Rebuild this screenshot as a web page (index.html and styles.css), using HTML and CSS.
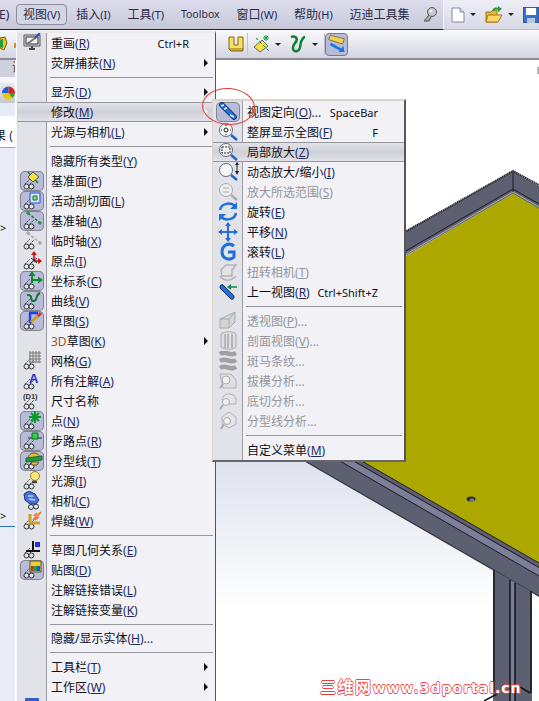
FILE: index.html
```html
<!DOCTYPE html>
<html lang="zh-CN">
  <head>
    <meta charset="UTF-8" />
    <title>视图菜单</title>
    <link rel="stylesheet" href="styles.css">
  </head>
  <body>
    <svg class="sprites" xmlns="http://www.w3.org/2000/svg">
      <symbol id="gl" viewBox="0 0 24 20">
        <path d="M5 13 L10 8 M10 13 L14 9" fill="none" stroke="#444" stroke-width="1" stroke-dasharray="2 1"/>
        <circle cx="6.5" cy="15.5" r="2.5" fill="#dbe6ee" stroke="#333"/>
        <circle cx="11.5" cy="15.5" r="2.5" fill="#dbe6ee" stroke="#333"/>
      </symbol>
      <symbol id="redraw" viewBox="0 0 24 20">
        <path d="M4 2 H20 V13 H4 Z" fill="#d8dae0" stroke="#555"/>
        <path d="M6 4 H18 V11 H6 Z" fill="#f4f4f6" stroke="#333"/>
        <path d="M7 11 L18 3" stroke="#777" stroke-width="2"/>
        <path d="M15 5 L20 0" stroke="#1c50d8" stroke-width="2"/>
        <path d="M9 16 H15 M12 13 V16" stroke="#444" stroke-width="2"/>
      </symbol>
      <symbol id="plane" viewBox="0 0 24 20">
        <use href="#gl"/>
        <path d="M8 1 L18 12" stroke="#0a8a2a" stroke-width="1.5"/>
        <path d="M13 1 L19 6 L13 11 L8 6 Z" fill="#f6e23c" stroke="#555"/>
      </symbol>
      <symbol id="cut" viewBox="0 0 24 20">
        <use href="#gl"/>
        <path d="M10 2 H20 V12 H10 Z" fill="#d8e6f4" stroke="#1c50d8"/>
        <path d="M13 5 H17 V9 H13 Z" fill="#9fd09a" stroke="#0a7a2a"/>
      </symbol>
      <symbol id="axis" viewBox="0 0 24 20">
        <use href="#gl"/>
        <path d="M8 2 L20 12" stroke="#0a8a2a" stroke-width="1.5" stroke-dasharray="3 1.5"/>
        <path d="M6 2 H10 M8 0 V4 M18 12 H22 M20 10 V14" stroke="#0a8a2a"/>
      </symbol>
      <symbol id="taxis" viewBox="0 0 24 20">
        <use href="#gl"/>
        <path d="M8 2 L20 12" stroke="#aaa" stroke-width="1.5" stroke-dasharray="3 1.5"/>
        <path d="M6 2 H10 M8 0 V4 M18 12 H22 M20 10 V14" stroke="#999"/>
      </symbol>
      <symbol id="origin" viewBox="0 0 24 20">
        <use href="#gl"/>
        <path d="M14 10 V3 M14 10 H21" stroke="#a11" stroke-width="1.5"/>
        <path d="M14 0 L11 4 H17 Z M22 10 L18 7 V13 Z" fill="#c11"/>
        <path d="M11 7 L17 12 M17 7 L11 12" stroke="#222"/>
      </symbol>
      <symbol id="coord" viewBox="0 0 24 20">
        <use href="#gl"/>
        <path d="M12 12 V4 M12 9 H19" stroke="#0a8a2a" stroke-width="2"/>
        <path d="M12 0 L8.5 5 H15.5 Z M23 9 L18 5.5 V12.5 Z" fill="#0a8a2a"/>
      </symbol>
      <symbol id="curve" viewBox="0 0 24 20">
        <use href="#gl"/>
        <path d="M7 4 C14 3 9 11 14 10 C18 9 15 4 20 2" fill="none" stroke="#0a7a2a" stroke-width="2"/>
      </symbol>
      <symbol id="sketch" viewBox="0 0 24 20">
        <use href="#gl"/>
        <path d="M9 2 H18 M10 2 V12" stroke="#2040e0" stroke-width="2.5"/>
        <path d="M11 11 L20 3" stroke="#c8a020" stroke-width="3"/>
        <path d="M18 5 L21 2" stroke="#d83030" stroke-width="3"/>
      </symbol>
      <symbol id="grid" viewBox="0 0 24 20">
        <use href="#gl"/>
        <path d="M9 2 H21 M9 5 H21 M9 8 H21 M9 11 H21 M10 0 V12 M13 0 V12 M16 0 V12 M19 0 V12" stroke="#777"/>
      </symbol>
      <symbol id="note" viewBox="0 0 24 20">
        <use href="#gl"/>
        <text x="9" y="12" class="ico-a">A</text>
      </symbol>
      <symbol id="dim" viewBox="0 0 24 20">
        <use href="#gl"/>
        <text x="3" y="8" class="ico-d">(D1)</text>
      </symbol>
      <symbol id="point" viewBox="0 0 24 20">
        <use href="#gl"/>
        <path d="M15 0 V12 M9 6 H21 M11 2 L19 10 M19 2 L11 10" stroke="#0a9a2a" stroke-width="2"/>
      </symbol>
      <symbol id="route" viewBox="0 0 24 20">
        <use href="#gl"/>
        <path d="M8 7 H22" stroke="#222"/>
        <path d="M12 2 H18 V8 H12 Z" fill="#30d040" stroke="#0a6a2a"/>
      </symbol>
      <symbol id="parting" viewBox="0 0 24 20">
        <use href="#gl"/>
        <path d="M8 8 C8 0 20 0 20 8 Z" fill="#e8c020" stroke="#554"/>
        <path d="M6 7 L22 5 L22 9 L6 11 Z" fill="#18a030" stroke="#264"/>
        <path d="M11 11 H19 L17 14 H12 Z" fill="#e8c020" stroke="#554"/>
      </symbol>
      <symbol id="light" viewBox="0 0 24 20">
        <use href="#gl"/>
        <circle cx="15" cy="5" r="4.5" fill="#f8e880" stroke="#a08018"/>
        <path d="M12 11 H17" stroke="#444" stroke-width="2.5"/>
      </symbol>
      <symbol id="camera" viewBox="0 0 24 20">
        <circle cx="16" cy="15.5" r="2.5" fill="#dbe6ee" stroke="#333"/>
        <circle cx="11" cy="16" r="2.5" fill="#dbe6ee" stroke="#333"/>
        <path d="M4 3 L9 0 L15 3 L19 9 L16 13 L10 13 L5 9 Z" fill="#4a72d8" stroke="#1c3070"/>
        <path d="M8 5 L13 5 M9 8 L15 9" stroke="#bcd0f8" stroke-width="1.5"/>
      </symbol>
      <symbol id="weld" viewBox="0 0 24 20">
        <use href="#gl"/>
        <path d="M10 3 V12 H20" fill="none" stroke="#c8a030" stroke-width="3"/>
        <path d="M13 9 L21 1 M15 9 L19 6 M14 5 L17 2" stroke="#f06818" stroke-width="1.5"/>
      </symbol>
      <symbol id="rel" viewBox="0 0 24 20">
        <use href="#gl"/>
        <path d="M13 1 V11 M6 11 H20" stroke="#111" stroke-width="2"/>
        <path d="M15 2 H20 V7 H15 Z" fill="#1c30e0"/>
      </symbol>
      <symbol id="decal" viewBox="0 0 24 20">
        <use href="#gl"/>
        <path d="M10 1 H21 V12 H10 Z" fill="#f0d030" stroke="#554"/>
        <path d="M11 6 H15 V11 H11 Z" fill="#d03030"/>
        <path d="M15 6 H20 V11 H15 Z" fill="#2050d0"/>
        <path d="M13 6 H17 V11 H13 Z" fill="#20a040"/>
      </symbol>
      <symbol id="orient" viewBox="0 0 24 20">
        <path d="M6 3 L12 9 L18 15" fill="none" stroke="#123" stroke-width="5.5" stroke-linecap="round"/>
        <path d="M6 3 L18 15" stroke="#2070e8" stroke-width="4" stroke-linecap="round"/>
        <path d="M5 4 L8 3 M8 7 L11 6 M14 13 L18 15" stroke="#e8f4ff" stroke-width="1.5"/>
      </symbol>
      <symbol id="lens" viewBox="0 0 24 20">
        <circle cx="10" cy="8" r="6.5" fill="#f4f6f8" stroke="#667"/>
        <path d="M15 13 L21 18" stroke="#2060c8" stroke-width="2.5"/>
      </symbol>
      <symbol id="zfit" viewBox="0 0 24 20">
        <use href="#lens"/>
        <circle cx="10" cy="8" r="2" fill="none" stroke="#222"/>
        <path d="M5 8 H6 M14 8 H15 M10 3 V4 M10 12 V13" stroke="#222"/>
      </symbol>
      <symbol id="zarea" viewBox="0 0 24 20">
        <use href="#lens"/>
        <path d="M6 5 H14 V11 H6 Z" fill="none" stroke="#222" stroke-dasharray="2 1"/>
      </symbol>
      <symbol id="zdyn" viewBox="0 0 24 20">
        <use href="#lens"/>
        <path d="M21 1 V11" stroke="#222"/>
        <path d="M21 0 L19 3 H23 Z M21 13 L19 9 H23 Z" fill="#222"/>
      </symbol>
      <symbol id="zsel" viewBox="0 0 24 20">
        <circle cx="10" cy="8" r="6.5" fill="#eceef0" stroke="#aaa"/>
        <path d="M15 13 L21 18" stroke="#aaa" stroke-width="2.5"/>
        <path d="M7 6 H13 M7 10 H13" stroke="#aaa"/>
      </symbol>
      <symbol id="rotate" viewBox="0 0 24 20">
        <path d="M4 8 C5 1 15 0 19 4 M20 11 C19 18 9 19 5 15" fill="none" stroke="#2070d8" stroke-width="2.5"/>
        <path d="M21 0 V7 H14 Z M3 19 V12 H10 Z" fill="#2070d8"/>
      </symbol>
      <symbol id="pan" viewBox="0 0 24 20">
        <path d="M12 2 V18 M4 10 H20" stroke="#2070d8" stroke-width="2"/>
        <path d="M12 0 L9 4 H15 Z M12 20 L9 16 H15 Z M2 10 L6 7 V13 Z M22 10 L18 7 V13 Z" fill="#2070d8"/>
      </symbol>
      <symbol id="roll" viewBox="0 0 24 20">
        <path d="M18 4 C13 0 6 3 6 10 C6 17 14 19 18 15 V10 H12" fill="none" stroke="#2070d8" stroke-width="3"/>
      </symbol>
      <symbol id="turn" viewBox="0 0 24 20">
        <path d="M5 8 L10 3 H20 L16 8 V14 H6 Z M4 14 C8 20 16 19 20 14" fill="#e4e4e6" stroke="#b4b4b8" stroke-width="1.5"/>
      </symbol>
      <symbol id="prev" viewBox="0 0 24 20">
        <path d="M6 5 L16 15" stroke="#123" stroke-width="5" stroke-linecap="round"/>
        <path d="M6 5 L16 15" stroke="#2070e8" stroke-width="3.5" stroke-linecap="round"/>
        <path d="M13 5 H21" stroke="#0a8a4a" stroke-width="1.5"/>
        <path d="M11 5 L15 2 V8 Z" fill="#0a8a4a"/>
      </symbol>
      <symbol id="persp" viewBox="0 0 24 20">
        <path d="M4 8 L19 1 V11 L13 17 H4 Z" fill="#d4d4d6" stroke="#aaa"/>
        <path d="M4 8 H13 V17 M13 8 L19 1" fill="none" stroke="#aaa"/>
      </symbol>
      <symbol id="section" viewBox="0 0 24 20">
        <path d="M5 3 C9 0 17 0 20 3 V16 C17 19 9 19 5 16 Z" fill="#dedee0" stroke="#aaa"/>
        <path d="M9 3 V17 M12 3 V17 M16 3 V17" stroke="#aaa" stroke-width="1.5"/>
      </symbol>
      <symbol id="zebra" viewBox="0 0 24 20">
        <path d="M4 3 C10 -1 14 6 20 2 M4 10 C10 6 14 13 20 9 M4 17 C10 13 14 20 20 16" fill="none" stroke="#a0a0a4" stroke-width="4.5"/>
      </symbol>
      <symbol id="draft" viewBox="0 0 24 20">
        <path d="M4 3 H15 L20 9 V17 H7 Z" fill="#e0e0e2" stroke="#b0b0b4"/>
        <circle cx="10" cy="9" r="4" fill="#f0f0f0" stroke="#aaa"/>
        <path d="M7 13 L4 17" stroke="#aaa" stroke-width="2"/>
      </symbol>
      <symbol id="under" viewBox="0 0 24 20">
        <path d="M6 9 C7 1 18 1 20 8 V13 H8" fill="#e4e4e6" stroke="#b0b0b4"/>
        <circle cx="10" cy="11" r="3.5" fill="#f0f0f0" stroke="#aaa"/>
        <path d="M7 14 L4 18" stroke="#aaa" stroke-width="2"/>
      </symbol>
      <symbol id="part2" viewBox="0 0 24 20">
        <path d="M6 6 L13 1 L20 6 V13 L13 17 L6 13 Z" fill="#e4e4e6" stroke="#b0b0b4"/>
        <circle cx="11" cy="10" r="3.5" fill="#f0f0f0" stroke="#aaa"/>
        <path d="M8 13 L5 18" stroke="#aaa" stroke-width="2"/>
      </symbol>
      <symbol id="partial" viewBox="0 0 24 20">
        <path d="M5 1 H19 V6 H5 Z" fill="#3060c8"/>
      </symbol>
    </svg>

    <div class="page">
      <div class="menubar">
        <div class="menubar-items">
          <span class="menu-cut">E)</span>
          <span class="menu-item open">视图<span class="mn">(V)</span></span>
          <span class="menu-item">插入<span class="mn">(I)</span></span>
          <span class="menu-item">工具<span class="mn">(T)</span></span>
          <span class="menu-item latin">Toolbox</span>
          <span class="menu-item">窗口<span class="mn">(W)</span></span>
          <span class="menu-item">帮助<span class="mn">(H)</span></span>
          <span class="menu-item">迈迪工具集</span>
          <svg class="pin" width="16" height="16" viewBox="0 0 16 16">
            <circle cx="10" cy="5" r="4.5" fill="#c8c8cc" stroke="#555"/>
            <circle cx="9" cy="4" r="1.5" fill="#f4f4f4"/>
            <path d="M7 8 L2 14 H7 L9 10" fill="#aaa" stroke="#555"/>
          </svg>
        </div>
        <div class="quickbar">
          <svg width="14" height="16" viewBox="0 0 14 16">
            <path d="M1 1 H9 L13 5 V15 H1 Z" fill="#fff" stroke="#7a8aa0"/>
            <path d="M9 1 V5 H13" fill="#dde6f0" stroke="#7a8aa0"/>
          </svg>
          <span class="drop"></span>
          <svg class="after-drop" width="18" height="18" viewBox="0 0 18 18">
            <path d="M1 6 H6 L8 4 H12 V16 H1 Z" fill="#e8b838" stroke="#a07818"/>
            <path d="M3 9 H17 L13 16 H1 Z" fill="#f8d868" stroke="#a07818"/>
            <path d="M8 5 C9 2 12 2 14 3" fill="none" stroke="#20a030" stroke-width="2"/>
            <path d="M17 3 L13 0 V6 Z" fill="#20a030"/>
          </svg>
          <span class="drop"></span>
          <svg class="after-drop" width="16" height="16" viewBox="0 0 16 16">
            <path d="M0 0 H16 V16 H0 Z" fill="#3a70c8" stroke="#204890"/>
            <path d="M3 1 H13 V8 H3 Z" fill="#fff"/>
            <path d="M4 11 H12 V16 H4 Z" fill="#b8c8dc"/>
          </svg>
        </div>
      </div>

      <div class="toolbar">
        <svg class="tb-left" width="18" height="18" viewBox="0 0 18 18">
          <path d="M0 3 L5 2 L7 8 L4 15 L0 13 Z" fill="#f0c020" stroke="#806010"/>
          <path d="M0 5 L3 4 V13 L0 12 Z" fill="#20a040"/>
          <path d="M14 8 H17 V13 H14 Z" fill="#d89020"/>
        </svg>
        <svg class="tb-book" width="16" height="18" viewBox="0 0 16 18">
          <path d="M1 2 H6 V10 H10 V2 H15 V14 H1 Z" fill="#f8e060" stroke="#806810"/>
          <path d="M1 14 L3 16 H15 V14" fill="#d8a820" stroke="#806810"/>
        </svg>
        <span class="tb-sep"></span>
        <svg class="tb-wand" width="20" height="20" viewBox="0 0 20 20">
          <path d="M2 13 L10 6 L16 12 L8 18 Z" fill="#f8e040" stroke="#666"/>
          <path d="M4 4 L17 17" stroke="#208030" stroke-dasharray="3 2"/>
          <path d="M14 1 V7 M11 4 H17 M12 2 L16 6 M16 2 L12 6" stroke="#10a040"/>
        </svg>
        <span class="drop"></span>
        <svg class="after-drop" width="16" height="18" viewBox="0 0 16 18">
          <path d="M2 2 C8 0 9 5 6 8 C3 12 3 17 8 16 C13 15 10 8 13 5 C14 3 15 2 16 2" fill="none" stroke="#0a8030" stroke-width="2.5"/>
        </svg>
        <span class="drop"></span>
        <span class="tb-sep"></span>
        <span class="tb-btn">
          <svg width="24" height="24" viewBox="0 0 24 24">
            <path d="M3 5 L19 10 L21 4 L5 0 Z" fill="#f0d060" stroke="#806810" transform="translate(0 2)"/>
            <path d="M5 12 L18 19" stroke="#1878e0" stroke-width="3"/>
            <path d="M21 21 L14 21 L20 14 Z" fill="#1878e0"/>
          </svg>
        </span>
      </div>

      <div class="workspace">
        <div class="sidebar">
          <div class="side-tab"><span class="clip-char">设</span></div>
          <div class="side-gap"></div>
          <div class="side-ball">
            <svg width="14" height="14" viewBox="0 0 14 14">
              <path d="M7 0 A7 7 0 0 0 0 7 H7 Z" fill="#2060d0"/>
              <path d="M7 0 A7 7 0 0 1 14 7 H7 Z" fill="#d02828"/>
              <path d="M0 7 A7 7 0 0 0 14 7 Z" fill="#e8c818"/>
              <path d="M7 7 H14 A7 7 0 0 1 11 12 Z" fill="#30a030"/>
            </svg>
          </div>
          <div class="side-pale"></div>
          <div class="side-title">果 <span class="mn">(</span></div>
          <div class="side-tree">
            <span class="side-arrow first">&gt;</span>
            <span class="side-arrow second">&gt;</span>
            <span class="side-line"></span>
          </div>
        </div>

        <svg class="view" viewBox="16 60 523 641" preserveAspectRatio="none">
          <defs>
            <linearGradient id="floor" x1="0" y1="0" x2="0" y2="1">
              <stop offset="0" stop-color="#dce0ec"/>
              <stop offset="1" stop-color="#ffffff"/>
            </linearGradient>
          </defs>
          <rect x="16" y="60" width="523" height="641" fill="#ffffff"/>
          <rect x="216" y="450" width="323" height="160" fill="url(#floor)"/>
          <rect x="537" y="67" width="2" height="7" fill="#b8b8b8"/>

          <!-- table top -->
          <path d="M300 291 L513 171 L539 186 V210 L513 194 L300 317 Z" fill="#5c6070"/>
          <path d="M300 291 L513 171 L539 185" fill="none" stroke="#2c2c30" stroke-width="2" stroke-dasharray="1.5 .5"/>
          <path d="M513 172 V192" stroke="#1c1c22" stroke-width="1"/>
          <path d="M300 312 L513 189 L539 204" fill="none" stroke="#1c1c22" stroke-width="1"/>
          <path d="M300 316 L513 192 L539 207" fill="none" stroke="#b0b0c4" stroke-width="1"/>
          <path d="M300 318 L513 193.500 L539 208.500 V563 L300 425.500 Z" fill="#aca800"/>
          <ellipse cx="471" cy="499" rx="4.500" ry="2.500" fill="#2c2c34"/>
          <ellipse cx="472" cy="500" rx="2.500" ry="1.500" fill="#7a7c8c"/>

          <!-- front rail -->
          <path d="M300 425.500 L539 563 V597 L300 459 Z" fill="#5c6070"/>
          <path d="M300 431 L539 568 V576 L300 438 Z" fill="#7c7e9a"/>
          <path d="M300 425.500 L539 563" stroke="#1c1c22" stroke-width="1"/>
          <path d="M300 430 L539 567.500" stroke="#1c1c22" stroke-width="1"/>
          <path d="M300 438 L539 576" stroke="#1c1c22" stroke-width="1"/>
          <path d="M300 458 L539 596" stroke="#33343c" stroke-width="1"/>

          <!-- leg -->
          <path d="M493 570 L532 592 V701 H493 Z" fill="#5c6070"/>
          <path d="M510 580 L515 583 V701 H510 Z" fill="#7c7e9a"/>
          <path d="M494 570 V692 M510 580 V701 M515 583 V701 M531 591 V693" stroke="#141418" stroke-width="1.500"/>
          <path d="M484 701 L497 694 M520 687 L530 693" stroke="#141418" stroke-width="1.500"/>
        </svg>
      </div>

      <ul class="menu menu-main">
        <li class="row"><span class="ico"><svg><use href="#redraw"/></svg></span><span class="lbl">重画<span class="mn">(<u>R</u>)</span></span><span class="sc">Ctrl+R</span></li>
        <li class="row"><span class="ico"></span><span class="lbl">荧屏捕获<span class="mn">(<u>N</u>)</span></span><span class="arrow"></span></li>
        <li class="sep"></li>
        <li class="row"><span class="ico"></span><span class="lbl">显示<span class="mn">(<u>D</u>)</span></span><span class="arrow"></span></li>
        <li class="row hot"><span class="ico"></span><span class="lbl">修改<span class="mn">(<u>M</u>)</span></span><span class="arrow"></span></li>
        <li class="row"><span class="ico"></span><span class="lbl">光源与相机<span class="mn">(<u>L</u>)</span></span><span class="arrow"></span></li>
        <li class="sep"></li>
        <li class="row"><span class="ico"></span><span class="lbl">隐藏所有类型<span class="mn">(<u>Y</u>)</span></span></li>
        <li class="row"><span class="ico on"><svg><use href="#plane"/></svg></span><span class="lbl">基准面<span class="mn">(<u>P</u>)</span></span></li>
        <li class="row"><span class="ico on"><svg><use href="#cut"/></svg></span><span class="lbl">活动剖切面<span class="mn">(<u>L</u>)</span></span></li>
        <li class="row"><span class="ico on"><svg><use href="#axis"/></svg></span><span class="lbl">基准轴<span class="mn">(<u>A</u>)</span></span></li>
        <li class="row"><span class="ico"><svg><use href="#taxis"/></svg></span><span class="lbl">临时轴<span class="mn">(<u>X</u>)</span></span></li>
        <li class="row"><span class="ico"><svg><use href="#origin"/></svg></span><span class="lbl">原点<span class="mn">(<u>I</u>)</span></span></li>
        <li class="row"><span class="ico on"><svg><use href="#coord"/></svg></span><span class="lbl">坐标系<span class="mn">(<u>C</u>)</span></span></li>
        <li class="row"><span class="ico on"><svg><use href="#curve"/></svg></span><span class="lbl">曲线<span class="mn">(<u>V</u>)</span></span></li>
        <li class="row"><span class="ico on"><svg><use href="#sketch"/></svg></span><span class="lbl">草图<span class="mn">(<u>S</u>)</span></span></li>
        <li class="row"><span class="ico"></span><span class="lbl"><span class="num">3D</span>草图<span class="mn">(<u>K</u>)</span></span><span class="arrow"></span></li>
        <li class="row"><span class="ico"><svg><use href="#grid"/></svg></span><span class="lbl">网格<span class="mn">(<u>G</u>)</span></span></li>
        <li class="row"><span class="ico"><svg><use href="#note"/></svg></span><span class="lbl">所有注解<span class="mn">(<u>A</u>)</span></span></li>
        <li class="row"><span class="ico"><svg><use href="#dim"/></svg></span><span class="lbl">尺寸名称</span></li>
        <li class="row"><span class="ico on"><svg><use href="#point"/></svg></span><span class="lbl">点<span class="mn">(<u>N</u>)</span></span></li>
        <li class="row"><span class="ico on"><svg><use href="#route"/></svg></span><span class="lbl">步路点<span class="mn">(<u>R</u>)</span></span></li>
        <li class="row"><span class="ico on"><svg><use href="#parting"/></svg></span><span class="lbl">分型线<span class="mn">(<u>T</u>)</span></span></li>
        <li class="row"><span class="ico"><svg><use href="#light"/></svg></span><span class="lbl">光源<span class="mn">(<u>I</u>)</span></span></li>
        <li class="row"><span class="ico"><svg><use href="#camera"/></svg></span><span class="lbl">相机<span class="mn">(<u>C</u>)</span></span></li>
        <li class="row"><span class="ico"><svg><use href="#weld"/></svg></span><span class="lbl">焊缝<span class="mn">(<u>W</u>)</span></span></li>
        <li class="sep"></li>
        <li class="row"><span class="ico"><svg><use href="#rel"/></svg></span><span class="lbl">草图几何关系<span class="mn">(<u>E</u>)</span></span></li>
        <li class="row"><span class="ico on"><svg><use href="#decal"/></svg></span><span class="lbl">贴图<span class="mn">(<u>D</u>)</span></span></li>
        <li class="row"><span class="ico"></span><span class="lbl">注解链接错误<span class="mn">(<u>L</u>)</span></span></li>
        <li class="row"><span class="ico"></span><span class="lbl">注解链接变量<span class="mn">(<u>K</u>)</span></span></li>
        <li class="sep tight"></li>
        <li class="row"><span class="ico"></span><span class="lbl">隐藏/显示实体<span class="mn">(<u>H</u>)...</span></span></li>
        <li class="sep"></li>
        <li class="row"><span class="ico"></span><span class="lbl">工具栏<span class="mn">(<u>T</u>)</span></span><span class="arrow"></span></li>
        <li class="row"><span class="ico"></span><span class="lbl">工作区<span class="mn">(<u>W</u>)</span></span><span class="arrow"></span></li>
        <li class="row"><span class="ico"><svg><use href="#partial"/></svg></span></li>
      </ul>

      <ul class="menu menu-sub">
        <li class="row"><span class="ico on"><svg><use href="#orient"/></svg></span><span class="lbl">视图定向<span class="mn">(<u>O</u>)...</span></span><span class="sc">SpaceBar</span></li>
        <li class="row"><span class="ico"><svg><use href="#zfit"/></svg></span><span class="lbl">整屏显示全图<span class="mn">(<u>F</u>)</span></span><span class="sc">F</span></li>
        <li class="row hot"><span class="ico"><svg><use href="#zarea"/></svg></span><span class="lbl">局部放大<span class="mn">(<u>Z</u>)</span></span></li>
        <li class="row"><span class="ico"><svg><use href="#zdyn"/></svg></span><span class="lbl">动态放大/缩小<span class="mn">(<u>I</u>)</span></span></li>
        <li class="row off"><span class="ico"><svg><use href="#zsel"/></svg></span><span class="lbl">放大所选范围<span class="mn">(<u>S</u>)</span></span></li>
        <li class="row"><span class="ico"><svg><use href="#rotate"/></svg></span><span class="lbl">旋转<span class="mn">(<u>E</u>)</span></span></li>
        <li class="row"><span class="ico"><svg><use href="#pan"/></svg></span><span class="lbl">平移<span class="mn">(<u>N</u>)</span></span></li>
        <li class="row"><span class="ico"><svg><use href="#roll"/></svg></span><span class="lbl">滚转<span class="mn">(<u>L</u>)</span></span></li>
        <li class="row off"><span class="ico"><svg><use href="#turn"/></svg></span><span class="lbl">扭转相机<span class="mn">(<u>T</u>)</span></span></li>
        <li class="row"><span class="ico"><svg><use href="#prev"/></svg></span><span class="lbl">上一视图<span class="mn">(<u>R</u>)</span></span><span class="sc">Ctrl+Shift+Z</span></li>
        <li class="sep"></li>
        <li class="row off"><span class="ico"><svg><use href="#persp"/></svg></span><span class="lbl">透视图<span class="mn">(<u>P</u>)...</span></span></li>
        <li class="row off"><span class="ico"><svg><use href="#section"/></svg></span><span class="lbl">剖面视图<span class="mn">(<u>V</u>)...</span></span></li>
        <li class="row off"><span class="ico"><svg><use href="#zebra"/></svg></span><span class="lbl">斑马条纹<span class="mn">...</span></span></li>
        <li class="row off"><span class="ico"><svg><use href="#draft"/></svg></span><span class="lbl">拔模分析<span class="mn">...</span></span></li>
        <li class="row off"><span class="ico"><svg><use href="#under"/></svg></span><span class="lbl">底切分析<span class="mn">...</span></span></li>
        <li class="row off"><span class="ico"><svg><use href="#part2"/></svg></span><span class="lbl">分型线分析<span class="mn">...</span></span></li>
        <li class="sep"></li>
        <li class="row"><span class="ico"></span><span class="lbl">自定义菜单<span class="mn">(<u>M</u>)</span></span></li>
      </ul>

      <div class="callout"></div>
      <div class="watermark"><span class="wm-cn">三维网</span>www.3dportal.cn</div>
    </div>
  </body>
</html>
```

FILE: styles.css
```css
* {
  margin: 0;
  padding: 0;
  box-sizing: border-box;
}

body {
  font-family: "Noto Sans", "Noto Sans CJK SC", sans-serif;
  font-size: 12px;
  color: #101018;
  background: #ffffff;
  overflow: hidden;
}

.sprites {
  position: absolute;
  width: 0;
  height: 0;
}

.page {
  position: relative;
  width: 539px;
  height: 701px;
  overflow: hidden;
  display: flex;
  flex-direction: column;
}

/* top menu */
.menubar {
  height: 30px;
  display: flex;
  flex-shrink: 0;
}

.menubar-items {
  width: 444px;
  flex-shrink: 0;
  display: flex;
  align-items: center;
  overflow: hidden;
  background: linear-gradient(#dddded, #c6c8d8);
  border-bottom: 1px solid #22222c;
  border-right: 1px solid #f2f2f8;
  color: #2c2c44;
}

.menu-cut {
  width: 16px;
  flex-shrink: 0;
  text-indent: -1px;
  overflow: hidden;
}

.menu-item {
  flex-shrink: 0;
  padding: 0 7px;
  margin-right: 0.8px;
  height: 21px;
  line-height: 19px;
  border: 1px solid transparent;
  white-space: nowrap;
}

.menu-item .mn {
  font-size: 11px;
}

.menu-item.open {
  margin-right: 1px;
  padding: 0 6px;
  border-color: #8c8c9c;
  border-radius: 4px;
  background: #d4d6e6;
}

.menu-item.latin {
  font-size: 10.5px;
}

.mn {
  color: #1c2a5c;
}

.pin {
  margin-left: 4px;
  flex-shrink: 0;
}

.quickbar {
  flex: 1;
  display: flex;
  align-items: center;
  padding-left: 7px;
  background: linear-gradient(#eeeef6, #d8d8e6);
  border-bottom: 1px solid #b8b8c4;
  overflow: hidden;
}

.drop {
  width: 0;
  height: 0;
  flex-shrink: 0;
  margin-left: 5px;
  border-left: 3px solid transparent;
  border-right: 3px solid transparent;
  border-top: 3px solid #222;
}

.after-drop {
  margin-left: 9px;
  flex-shrink: 0;
}

/* command toolbar */
.toolbar {
  height: 30px;
  flex-shrink: 0;
  display: flex;
  align-items: center;
  background: linear-gradient(#fafafc, #d4d4e2);
  border-bottom: 2px solid #8c8c96;
}

.tb-left {
  flex-shrink: 0;
}

.tb-book {
  margin-left: 210px;
  flex-shrink: 0;
}

.tb-sep {
  width: 1px;
  height: 22px;
  margin: 0 4px 0 3px;
  background: #c0c0cc;
}

.tb-wand + .drop {
  margin-left: 3px;
}

.toolbar .after-drop {
  margin-left: 8px;
}

.toolbar .after-drop + .drop {
  margin-left: 7px;
}

.toolbar .drop + .tb-sep {
  margin: 0 0 0 6px;
}

.tb-btn {
  width: 23px;
  height: 23px;
  display: flex;
  align-items: center;
  justify-content: center;
  background: #b8bcdc;
  border: 1px solid #77787f;
  border-radius: 4px;
}

/* left panel and graphics area */
.workspace {
  flex: 1;
  display: flex;
  min-height: 0;
}

.sidebar {
  width: 16px;
  flex-shrink: 0;
  display: flex;
  flex-direction: column;
  overflow: hidden;
  border-right: 1px solid #ffffff;
}

.side-tab {
  height: 17px;
  background: #cfd0de;
  overflow: hidden;
}

.clip-char {
  display: block;
  margin-left: 12px;
  line-height: 16px;
  color: #333;
}

.side-gap {
  height: 6px;
  background: #f6f6fa;
}

.side-ball {
  height: 20px;
  display: flex;
  align-items: center;
  padding-left: 2px;
  background: linear-gradient(#e8e8f0, #c4c6d2);
}

.side-pale {
  height: 13px;
  background: #e6ebf6;
}

.side-title {
  height: 32px;
  padding-top: 11px;
  line-height: 18px;
  white-space: nowrap;
  margin-left: -6px;
  background: #ffffff;
  border-bottom: 1px solid #e0a020;
}

.side-tree {
  flex: 1;
  position: relative;
  background: #e8ecf6;
}

.side-arrow {
  position: absolute;
  left: 0;
  font-size: 11px;
  line-height: 12px;
  color: #222;
}

.side-arrow.first {
  top: 74px;
}

.side-arrow.second {
  top: 362px;
}

.side-line {
  position: absolute;
  left: 0;
  right: 0;
  top: 378px;
  height: 1px;
  background: #3070c0;
}

.view {
  flex: 1;
  display: block;
  height: 641px;
  min-width: 0;
}

/* dropdowns */
.menu {
  position: absolute;
  list-style: none;
  background: linear-gradient(90deg, #e2e3e8 0 29px, #9c9ca4 29px 30px, #f1f1f6 30px);
}

.menu-main {
  left: 16px;
  top: 31px;
  width: 200px;
  height: 680px;
  border-left: 1px solid #f8f8f8;
  border-top: 2px solid #ebebeb;
  border-right: 1px solid #55555c;
}

.menu-sub {
  left: 212px;
  top: 99px;
  width: 194px;
  height: 363px;
  padding-top: 1px;
  border-left: 1px solid #d8d4cc;
  border-top: 2px solid #d8d4cc;
  border-right: 2px solid #55555c;
  border-bottom: 2px solid #66666c;
}

.row {
  height: 20px;
  display: flex;
  align-items: center;
  white-space: nowrap;
}

.row.hot {
  background: linear-gradient(#e4e4ea, #cfcfd8 50%, #e4e4ea);
  box-shadow: inset 0 1px 0 #95959e, inset 0 -1px 0 #95959e;
}

.row.off,
.row.off .mn,
.row.off .sc {
  color: #96969c;
}

.ico {
  width: 30px;
  height: 20px;
  flex-shrink: 0;
  padding-left: 3px;
}

.ico svg {
  display: block;
  width: 24px;
  height: 20px;
  overflow: visible;
}

.ico.on svg {
  background: #b8bbda;
  border-radius: 5px;
  box-shadow: inset 0 0 0 1px #85858f;
}

.ico-a {
  font: bold 13px "Liberation Sans", sans-serif;
  fill: #2030c8;
}

.ico-d {
  font: bold 7.5px "Liberation Sans", sans-serif;
  fill: #333;
}

.lbl {
  padding-left: 4px;
}

.num {
  color: #9a5a20;
}

.sc {
  margin-left: auto;
  margin-right: 26px;
  font-size: 11px;
}

.arrow {
  margin-left: auto;
  margin-right: 7px;
  width: 0;
  height: 0;
  border-top: 4px solid transparent;
  border-bottom: 4px solid transparent;
  border-left: 4px solid #111;
}

.row.hot .arrow {
  border-left-color: #f4f4f8;
}

.sep {
  height: 9px;
  margin-left: 33px;
  margin-right: 2px;
  padding-top: 4px;
}

.sep.tight {
  height: 8px;
}

.sep::after {
  content: "";
  display: block;
  height: 1px;
  background: #96969e;
}

/* annotations drawn over the screenshot */
.callout {
  position: absolute;
  left: 202px;
  top: 88px;
  width: 53px;
  height: 37px;
  border: 1px solid #e23a3a;
  border-radius: 50%;
  transform: rotate(4deg);
}

.watermark {
  position: absolute;
  left: 320px;
  top: 679px;
  font-family: "DejaVu Sans", "Noto Sans CJK SC", sans-serif;
  font-size: 14px;
  font-weight: bold;
  line-height: 18px;
  letter-spacing: 1px;
  white-space: nowrap;
  color: #ffffff;
  text-shadow: 0.7px 0 #ee4040, -0.7px 0 #ee4040, 0 0.7px #ee4040, 0 -0.7px #ee4040;
}

.wm-cn {
  font-size: 16px;
  letter-spacing: 1.5px;
}
```
